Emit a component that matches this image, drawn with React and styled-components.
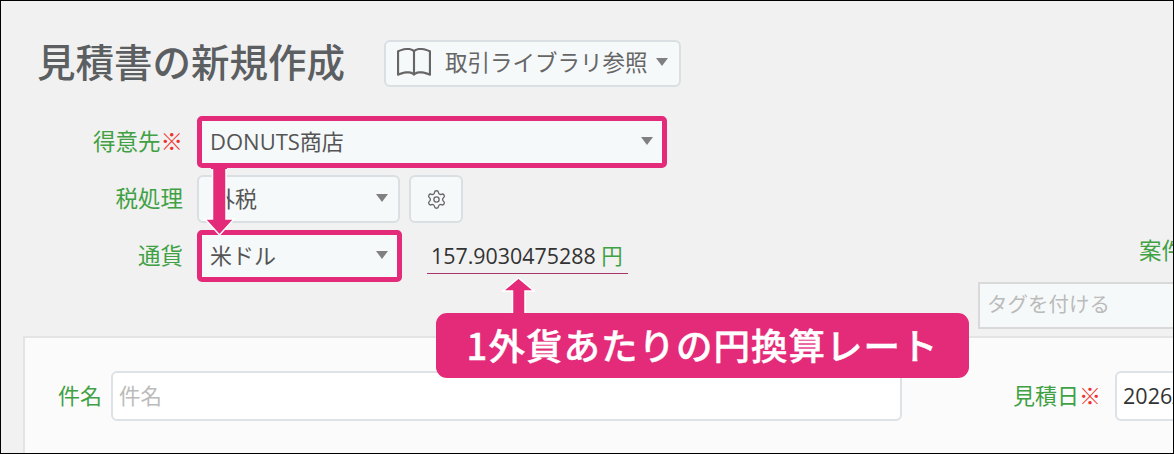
import React from "react";
import styled, { createGlobalStyle } from "styled-components";
import { BsBook } from "react-icons/bs";
import { Settings } from "lucide-react";

const PINK = "#e32b79";
const GREEN = "#3fa144";

const Global = createGlobalStyle`
  html, body { margin: 0; padding: 0; background: #f1f1f1; }
  * { box-sizing: border-box; }
`;

const Frame = styled.div`
  position: relative;
  width: 1174px;
  height: 454px;
  border: 1px solid #000;
  background: #f1f1f1;
  overflow: hidden;
  font-family: "Open Sans", "Noto Sans CJK JP", sans-serif;
  color: #555;
`;

const Top = styled.div`
  display: flex;
  align-items: flex-end;
  padding-bottom: 7px;
`;

const Main = styled.div`
  flex: none;
  width: 977px;
  padding: 39px 0 49px 36px;
`;

const Header = styled.div`
  display: flex;
  align-items: center;
  gap: 39px;
  margin-bottom: 31px;
`;

const Title = styled.h1`
  margin: 0;
  padding-bottom: 4px;
  font-size: 38.5px;
  font-weight: 500;
  line-height: 42px;
  color: #5c5f61;
  white-space: nowrap;
`;

const LibraryButton = styled.button`
  display: flex;
  align-items: center;
  width: 297px;
  height: 47px;
  padding: 0 0 2px 11px;
  background: #f6f9fa;
  border: 2px solid #d9dfe3;
  border-radius: 6px;
  font: inherit;
  font-size: 22.5px;
  color: #666;
  white-space: nowrap;
`;

const ButtonLabel = styled.span`
  margin: 0 8px 0 14px;
  padding-bottom: 2px;
`;

const Caret = styled.span`
  flex: none;
  width: 0;
  height: 0;
  margin-bottom: 2px;
  border-left: 6.5px solid transparent;
  border-right: 6.5px solid transparent;
  border-top: 8px solid #808080;
`;

const Rows = styled.div`
  display: flex;
  flex-direction: column;
  gap: 9px;
  margin-left: -36px;
`;

const Row = styled.div`
  display: flex;
  align-items: center;
  height: 48px;
`;

const FieldLabel = styled.span`
  flex: none;
  width: 182px;
  margin-right: 14px;
  padding-bottom: 4px;
  text-align: right;
  font-size: 22.5px;
  color: ${GREEN};
  white-space: nowrap;
`;

const Required = styled.span`
  color: #f0302a;
`;

const Select = styled.div`
  display: flex;
  align-items: center;
  justify-content: space-between;
  flex: none;
  width: ${(p) => p.$width}px;
  height: 48px;
  margin-left: ${(p) => (p.$marked ? 2 : 0)}px;
  padding: 0 10px 0 ${(p) => (p.$marked ? 9 : 14)}px;
  background: #f6f9fa;
  border: 2px solid #dadfe3;
  border-radius: ${(p) => (p.$marked ? 3 : 6)}px;
  font-size: 22px;
  color: #555;
  outline: ${(p) => (p.$marked ? `5px solid ${PINK}` : "none")};
  outline-offset: -3px;
`;

const SelectText = styled.span`
  padding-bottom: 4px;
`;

const GearButton = styled.div`
  display: flex;
  align-items: center;
  justify-content: center;
  width: 54px;
  height: 48px;
  margin-left: 9px;
  background: #f6f9fa;
  border: 2px solid #dadfe3;
  border-radius: 6px;
  color: #666;
`;

const Rate = styled.div`
  width: 201px;
  height: 36px;
  margin-left: 27px;
  padding-left: 4px;
  border-bottom: 1px solid #a9366a;
  font-size: 21.4px;
  line-height: 36px;
  color: #333;
  white-space: nowrap;
`;

const Unit = styled.span`
  color: ${GREEN};
`;

const Side = styled.div`
  flex: none;
  width: 320px;
`;

const SideLabel = styled.div`
  padding-left: 161px;
  margin-bottom: 16px;
  font-size: 22.5px;
  line-height: 30px;
  color: ${GREEN};
  white-space: nowrap;
`;

const TagInput = styled.div`
  height: 47px;
  padding-left: 7px;
  background: #f6f9fa;
  border: 2px solid #d9d9d9;
  font-size: 20.5px;
  line-height: 40px;
  color: #bbb;
`;

const Card = styled.div`
  display: flex;
  align-items: flex-start;
  width: 1300px;
  height: 200px;
  margin-left: 22px;
  padding: 33px 0 0 33px;
  background: #fbfbfb;
  border: 2px solid #e4e4e4;
`;

const CardLabel = styled.span`
  flex: none;
  height: 50px;
  margin-right: ${(p) => p.$gap}px;
  font-size: 22px;
  line-height: 48px;
  color: ${GREEN};
  white-space: nowrap;
`;

const TextInput = styled.div`
  flex: none;
  width: ${(p) => p.$width}px;
  height: 50px;
  padding-left: 6px;
  background: #fff;
  border: 2px solid #dde2e6;
  border-radius: 6px;
  font-size: 21.5px;
  line-height: 46px;
  color: ${(p) => (p.$placeholder ? "#bbb" : "#333")};
`;

const Spacer = styled.div`
  flex: none;
  width: 111px;
`;

const Callout = styled.div`
  position: absolute;
  left: 435px;
  top: 312px;
  display: flex;
  align-items: center;
  justify-content: center;
  width: 533px;
  height: 65px;
  padding-bottom: 2px;
  background: ${PINK};
  border-radius: 11px;
  font-family: "Noto Sans CJK JP", sans-serif;
  font-size: 36.5px;
  font-weight: 500;
  letter-spacing: 1px;
  -webkit-text-stroke: 0.4px #fff;
  color: #fff;
  white-space: nowrap;
`;

const Arrow = styled.svg`
  position: absolute;
  left: ${(p) => p.$left}px;
  top: ${(p) => p.$top}px;
`;

export default function App() {
  return (
    <Frame>
      <Global />
      <Top>
        <Main>
          <Header>
            <Title>見積書の新規作成</Title>
            <LibraryButton>
              <BsBook size={34} />
              <ButtonLabel>取引ライブラリ参照</ButtonLabel>
              <Caret />
            </LibraryButton>
          </Header>
          <Rows>
            <Row>
              <FieldLabel>
                得意先<Required>※</Required>
              </FieldLabel>
              <Select $width={466} $marked>
                <SelectText>DONUTS商店</SelectText>
                <Caret />
              </Select>
            </Row>
            <Row>
              <FieldLabel>税処理</FieldLabel>
              <Select $width={203}>
                <SelectText>外税</SelectText>
                <Caret />
              </Select>
              <GearButton>
                <Settings size={21} strokeWidth={1.5} />
              </GearButton>
            </Row>
            <Row>
              <FieldLabel>通貨</FieldLabel>
              <Select $width={201} $marked>
                <SelectText>米ドル</SelectText>
                <Caret />
              </Select>
              <Rate>
                157.9030475288 <Unit>円</Unit>
              </Rate>
            </Row>
          </Rows>
        </Main>
        <Side>
          <SideLabel>案件名</SideLabel>
          <TagInput>タグを付ける</TagInput>
        </Side>
      </Top>
      <Card>
        <CardLabel $gap={9}>件名</CardLabel>
        <TextInput $width={791} $placeholder>
          件名
        </TextInput>
        <Spacer />
        <CardLabel $gap={14}>
          見積日<Required>※</Required>
        </CardLabel>
        <TextInput $width={200}>2026/01/01</TextInput>
      </Card>
      <Arrow $left={198} $top={166} width="40" height="72" viewBox="0 0 40 72">
        <polygon
          points="13.5,0 27,0 27,52 35,52 20.5,68 6,52 13.5,52"
          fill={PINK}
          stroke="#fff"
          strokeWidth="1.5"
        />
        <rect x="12" y="0" width="16" height="2" fill={PINK} />
      </Arrow>
      <Arrow $left={500} $top={275} width="36" height="40" viewBox="0 0 36 40">
        <polygon
          points="17.5,2 33,15 24,15 24,38 11.5,38 11.5,15 2,15"
          fill={PINK}
          stroke="#fff"
          strokeWidth="1.5"
        />
      </Arrow>
      <Callout>1外貨あたりの円換算レート</Callout>
    </Frame>
  );
}
